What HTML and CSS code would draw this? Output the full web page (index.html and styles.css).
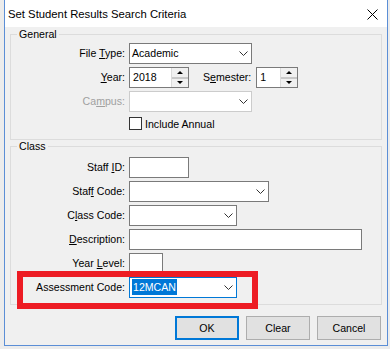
FILE: index.html
```html
<!DOCTYPE html>
<html lang="en">
<head>
    <meta charset="UTF-8">
    <meta name="viewport" content="width=device-width, initial-scale=1.0">
    <title>Set Student Results Search Criteria</title>
    <link rel="stylesheet" href="styles.css">
</head>
<body>
    <div class="window">
        <div class="titlebar">
            <span class="title">Set Student Results Search Criteria</span>
            <svg class="close" width="11" height="11" viewBox="0 0 11 11">
                <path d="M0.5 0.5 L10.5 10.5 M10.5 0.5 L0.5 10.5" stroke="#000" stroke-width="1" fill="none"/>
            </svg>
        </div>

        <div class="dialog">
            <fieldset class="group">
                <legend>General</legend>
                <div class="form general-form">
                    <label class="lbl">File <u>T</u>ype:</label>
                    <div class="combo w-123">
                        <span class="val">Academic</span>
                        <svg class="chevron" width="9" height="5" viewBox="0 0 9 5"><polyline points="0.5,0.5 4.5,4.5 8.5,0.5" fill="none" stroke="#333"/></svg>
                    </div>

                    <label class="lbl"><u>Y</u>ear:</label>
                    <div class="pair">
                        <div class="spin w-60">
                            <span class="val">2018</span>
                            <div class="spin-btns">
                                <span class="spin-btn"><i class="arrow-up"></i></span>
                                <span class="spin-btn"><i class="arrow-down"></i></span>
                            </div>
                        </div>
                        <label class="lbl sem-lbl">S<u>e</u>mester:</label>
                        <div class="spin w-42">
                            <span class="val">1</span>
                            <div class="spin-btns">
                                <span class="spin-btn"><i class="arrow-up"></i></span>
                                <span class="spin-btn"><i class="arrow-down"></i></span>
                            </div>
                        </div>
                    </div>

                    <label class="lbl disabled">Ca<u>m</u>pus:</label>
                    <div class="combo disabled w-123">
                        <span class="val"></span>
                        <svg class="chevron" width="9" height="5" viewBox="0 0 9 5"><polyline points="0.5,0.5 4.5,4.5 8.5,0.5" fill="none" stroke="#333"/></svg>
                    </div>

                    <span></span>
                    <label class="check"><span class="box"></span>Include Annual</label>
                </div>
            </fieldset>

            <fieldset class="group">
                <legend>Class</legend>
                <div class="form class-form">
                    <label class="lbl">Staff <u>I</u>D:</label>
                    <div class="textbox w-60"></div>

                    <label class="lbl">Staf<u>f</u> Code:</label>
                    <div class="combo w-140">
                        <span class="val"></span>
                        <svg class="chevron" width="9" height="5" viewBox="0 0 9 5"><polyline points="0.5,0.5 4.5,4.5 8.5,0.5" fill="none" stroke="#333"/></svg>
                    </div>

                    <label class="lbl">C<u>l</u>ass Code:</label>
                    <div class="combo w-108">
                        <span class="val"></span>
                        <svg class="chevron" width="9" height="5" viewBox="0 0 9 5"><polyline points="0.5,0.5 4.5,4.5 8.5,0.5" fill="none" stroke="#333"/></svg>
                    </div>

                    <label class="lbl"><u>D</u>escription:</label>
                    <div class="textbox w-233"></div>

                    <label class="lbl">Year <u>L</u>evel:</label>
                    <div class="textbox w-34"></div>

                    <label class="lbl">Assessment Code:</label>
                    <div class="combo focused w-108">
                        <span class="val"><span class="selected">12MCAN</span></span>
                        <svg class="chevron" width="9" height="5" viewBox="0 0 9 5"><polyline points="0.5,0.5 4.5,4.5 8.5,0.5" fill="none" stroke="#333"/></svg>
                    </div>
                </div>
            </fieldset>

            <div class="buttons">
                <button class="btn default">OK</button>
                <button class="btn">Clear</button>
                <button class="btn">Cancel</button>
            </div>
        </div>

        <!-- red highlight drawn over the screenshot -->
        <div class="annotation"></div>
    </div>
</body>
</html>
```

FILE: styles.css
```css
body {
    margin: 0;
    background-color: #ececec;
    font-family: "Liberation Sans", Arial, sans-serif;
    font-size: 10.6px;
    color: #000;
}

.window {
    position: relative;
    width: 384px;
    height: 346px;
    box-sizing: border-box;
    margin-left: 4px;
    background-color: #f0f0f0;
    border: 1px solid #5b8ed6;
    border-top: none;
}

.titlebar {
    height: 27px;
    display: flex;
    align-items: center;
    padding-left: 3px;
    padding-right: 9px;
    background-color: #fff;
}

.title {
    font-size: 11.3px;
    flex: 1;
}

.close {
    display: block;
    margin-top: 1px;
}

.dialog {
    padding: 1px 5px 5px;
}

/* group boxes */
.group {
    margin: 0;
    padding: 0;
    min-width: 0;
    border: 1px solid #dcdcdc;
}

.group legend {
    margin-left: 6px;
    padding: 0 2px;
    line-height: 13px;
}

.form {
    display: grid;
    grid-template-columns: 114px auto;
    column-gap: 4px;
    row-gap: 3px;
    justify-items: start;
    align-items: center;
}

.general-form {
    grid-template-rows: 21px 21px 21px 17px;
    padding: 2px 0 7px;
}

.class-form {
    grid-auto-rows: 21px;
    padding: 4px 0 6px;
}

.lbl {
    justify-self: end;
    line-height: 21px;
    white-space: nowrap;
}

.lbl.disabled {
    color: #a0a0a0;
}

/* inputs */
.combo, .textbox, .spin {
    height: 21px;
    box-sizing: border-box;
    border: 1px solid #7a7a7a;
    background-color: #fff;
    display: flex;
    align-items: center;
}

.combo.disabled {
    border-color: #cccccc;
}

.combo.focused {
    border-color: #0078d7;
}

.val {
    flex: 1;
    padding-left: 2px;
    line-height: 19px;
    white-space: nowrap;
}

.selected {
    background-color: #0078d7;
    color: #fff;
    display: inline-block;
    line-height: 16px;
    padding: 0 1px;
}

.chevron {
    display: block;
    margin-right: 3px;
}

.w-34 { width: 34px; }
.w-42 { width: 42px; }
.w-60 { width: 60px; }
.w-108 { width: 108px; }
.w-123 { width: 123px; }
.w-140 { width: 140px; }
.w-233 { width: 233px; }

/* year / semester spinners */
.pair {
    display: flex;
    align-items: center;
}

.sem-lbl {
    margin-left: 14px;
    margin-right: 5px;
}

.spin {
    align-items: stretch;
}

.spin .val {
    padding-left: 3px;
}

.spin-btns {
    width: 16px;
    display: flex;
    flex-direction: column;
    gap: 2px;
    background-color: #c8c8c8;
    border-left: 1px solid #dadada;
}

.spin-btn {
    flex: 1;
    display: flex;
    align-items: center;
    justify-content: center;
    background-color: #f0f0f0;
}

.arrow-up {
    border-left: 3px solid transparent;
    border-right: 3px solid transparent;
    border-bottom: 3px solid #000;
}

.arrow-down {
    border-left: 3px solid transparent;
    border-right: 3px solid transparent;
    border-top: 3px solid #000;
}

/* checkbox */
.check {
    display: flex;
    align-items: center;
    gap: 3px;
    white-space: nowrap;
}

.box {
    width: 13px;
    height: 13px;
    box-sizing: border-box;
    border: 1px solid #333;
    background-color: #fff;
}

/* buttons */
.buttons {
    display: flex;
    justify-content: flex-end;
    gap: 7px;
    margin-top: 11px;
    padding-right: 1px;
}

.btn {
    width: 64px;
    height: 24px;
    box-sizing: border-box;
    padding: 0;
    font-family: inherit;
    font-size: 10.6px;
    color: #000;
    background-color: #e1e1e1;
    border: 1px solid #adadad;
}

.btn.default {
    border: 2px solid #0078d7;
}

.annotation {
    position: absolute;
    top: 271px;
    left: 12px;
    width: 241px;
    height: 38px;
    box-sizing: border-box;
    border: 6px solid #ed1c24;
}
```
